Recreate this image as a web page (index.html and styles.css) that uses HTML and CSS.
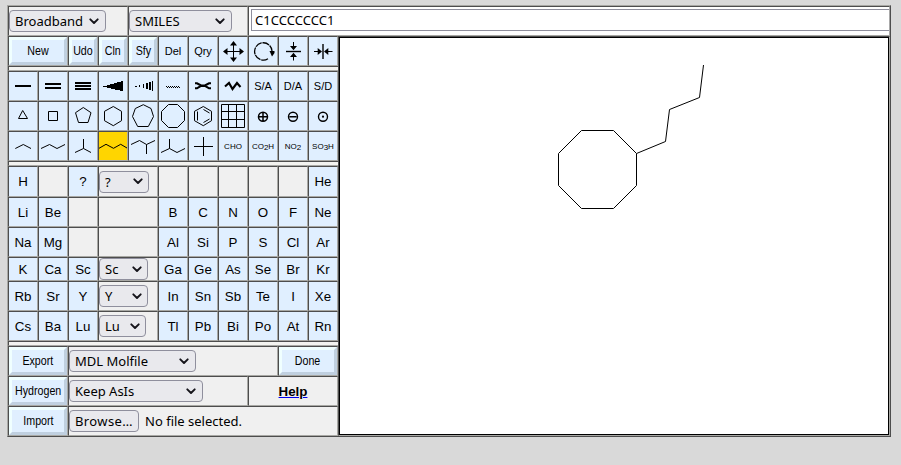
FILE: index.html
```html
<!DOCTYPE html>
<html lang="en">
<head>
<meta charset="utf-8">
<title>Molecule editor</title>
<link rel="stylesheet" href="styles.css">
</head>
<body>
<svg class="defs" width="0" height="0"><symbol id="chev" viewBox="0 0 10 7"><path d="M1.3 1.3 5 5 8.7 1.3" fill="none" stroke="#15141a" stroke-width="1.9" stroke-linecap="round" stroke-linejoin="round"/></symbol></svg>
<main class="app">
  <header class="topbar">
    <div class="cell plain"><div class="select w97"><span>Broadband</span><svg><use href="#chev"/></svg></div></div>
    <div class="cell plain"><div class="select w103"><span>SMILES</span><svg><use href="#chev"/></svg></div></div>
    <div class="cell field"><div class="input"><span>C1CCCCCCC1</span></div></div>
  </header>
  <div class="body">
    <aside class="panel">
      <div class="grid">
        <div class="cell span2 raised"><span>New</span></div>
        <div class="cell raised"><span>Udo</span></div>
        <div class="cell raised"><span>Cln</span></div>
        <div class="cell raised"><span>Sfy</span></div>
        <div class="cell mid">Del</div>
        <div class="cell mid">Qry</div>
        <div class="cell"><svg class="icon" viewBox="0 0 28 28"><path d="M14.5 6v17M6 14.5h17"/><path class="solid" d="M14.5 4l3.5 4.5h-7zM14.5 25l3.5-4.5h-7zM4 14.5l4.5-3.500v7zM25 14.5l-4.500-3.500v7z"/></svg></div>
        <div class="cell"><svg class="icon" viewBox="0 0 28 28"><path stroke-width="1.3" stroke-dasharray="7 .8" d="M19 21.800A8.700 8.700 0 1 1 23 14"/><path class="solid" d="M20.500 14h5v2l-2.500 3.500z"/></svg></div>
        <div class="cell"><svg class="icon" viewBox="0 0 28 28"><path stroke-width="1.400" d="M7 14.500h15"/><path d="M14.500 5v6M14.500 18v5.500"/><path class="solid" d="M11 9h7l-3.500 4.300zM11 20h7l-3.500-4.300z"/></svg></div>
        <div class="cell"><svg class="icon" viewBox="0 0 28 28"><path stroke-width="1.400" d="M14 7v15"/><path d="M5 14.500h6M17 14.500h6.500"/><path class="solid" d="M8.700 11v7l4.300-3.500zM19.300 11v7l-4.300-3.500z"/></svg></div>
      </div>
      <div class="gap"></div>
      <div class="grid">
        <div class="cell"><svg class="icon" viewBox="0 0 28 28"><path stroke-width="2" d="M6 14h16"/></svg></div>
        <div class="cell"><svg class="icon" viewBox="0 0 28 28"><path stroke-width="2" d="M6 12h16M6 16h16"/></svg></div>
        <div class="cell"><svg class="icon" viewBox="0 0 28 28"><path stroke-width="2" d="M6 11h16M6 14h16M6 17h16"/></svg></div>
        <div class="cell"><svg class="icon crisp" viewBox="0 0 28 28"><path class="solid" d="M4 14v1h4v1h4v1h4v1h5v1h3V9h-2v1h-4v1h-3v1h-4v1H8v1z"/></svg></div>
        <div class="cell"><svg class="icon crisp" viewBox="0 0 28 28"><path class="solid" d="M6 14h2v1H6zM10 13h1v2h-1zM14 12h1v4h-1zM17 11h2v6h-2zM20 10h2v8h-2zM23 9h1v10h-1z"/></svg></div>
        <div class="cell"><svg class="icon crisp" viewBox="0 0 28 28"><path class="solid" d="M7 14h1v1H7zM9 14h1v1H9zM11 14h1v1h-1zM13 14h1v1h-1zM15 14h1v1h-1zM17 14h1v1h-1zM19 14h1v1h-1zM8 15h1v1H8zM10 15h1v1h-1zM12 15h1v1h-1zM14 15h1v1h-1zM16 15h1v1h-1zM18 15h1v1h-1zM20 15h1v1h-1z"/></svg></div>
        <div class="cell"><svg class="icon" viewBox="0 0 28 28"><path stroke-width="2.100" d="M6 11.300h2l4 2.200h4l4-2.200h2M6 16.300h2l4-2.400h4l4 2.400h2"/></svg></div>
        <div class="cell"><svg class="icon" viewBox="0 0 28 28"><path stroke-width="2.100" d="M6 14.500l4-3.500 3.500 6 4.500-6 3.500 4"/></svg></div>
        <div class="cell mid">S/A</div>
        <div class="cell mid">D/A</div>
        <div class="cell mid">S/D</div>

        <div class="cell"><svg class="icon" viewBox="0 0 28 28"><path d="M13.700 8.500 9.500 16.500h9z"/></svg></div>
        <div class="cell"><svg class="icon" viewBox="0 0 28 28"><path d="M9.500 9.500h9v9h-9z"/></svg></div>
        <div class="cell"><svg class="icon" viewBox="0 0 28 28"><path d="M14.300 5.500 22 10.700 19 20.500H9.500l-3-9.800z"/></svg></div>
        <div class="cell"><svg class="icon" viewBox="0 0 28 28"><path d="M14.300 4.500 22.500 9.300v9.400l-8.200 5-8.800-5V9.300z"/></svg></div>
        <div class="cell"><svg class="icon" viewBox="0 0 28 28"><path d="M14.300 2.700 22 6.500 24.500 14.500 19.300 24.500H8.700L3.500 14.500 6.300 6.500z"/></svg></div>
        <div class="cell"><svg class="icon" viewBox="0 0 28 28"><path d="M9.500 2.500h9l7 7v9l-7 7h-9l-7-7v-9z"/></svg></div>
        <div class="cell"><svg class="icon" viewBox="0 0 28 28"><path d="M14.300 4.500 22.500 9.300v9.400l-8.200 5-8.800-5V9.300zM8.500 9.500v9M14.500 7.500l6 3.500M14.500 20.500l6-3.500"/></svg></div>
        <div class="cell"><svg class="icon" viewBox="0 0 28 28"><path d="M2.500 2.500h23v23h-23zM9.500 2.500v23M17.500 2.500v23M2.500 9.500h23M2.500 17.500h23"/></svg></div>
        <div class="cell"><svg class="icon" viewBox="0 0 28 28"><path stroke-width="1.500" d="M9.500 14.700a4.500 4.500 0 1 0 9 0a4.500 4.500 0 1 0-9 0h9M14 10.200v9"/></svg></div>
        <div class="cell"><svg class="icon" viewBox="0 0 28 28"><path stroke-width="1.400" d="M9.500 14.700a4.500 4.500 0 1 0 9 0a4.500 4.500 0 1 0-9 0M10.500 14.700h7"/></svg></div>
        <div class="cell"><svg class="icon" viewBox="0 0 28 28"><circle cx="14" cy="14.700" r="4.500" stroke-width="1.400"/><circle class="solid" cx="14" cy="14.700" r="1.100"/></svg></div>

        <div class="cell"><svg class="icon" viewBox="0 0 28 28"><path d="M6.300 16.500l8-4 7.700 4"/></svg></div>
        <div class="cell"><svg class="icon" viewBox="0 0 28 28"><path d="M2 16.500l8.500-4 7.500 4 8-4"/></svg></div>
        <div class="cell"><svg class="icon" viewBox="0 0 28 28"><path d="M14.500 7v9.500M6 20.500l8.500-4 7.500 4"/></svg></div>
        <div class="cell active"><svg class="icon" viewBox="0 0 28 28"><path d="M0 16.300l7-4 7.500 4 7.200-4 6.800 4"/></svg></div>
        <div class="cell"><svg class="icon" viewBox="0 0 28 28"><path d="M2 12.500l8.500-4 7 4 8.500-4M17.500 12.500v9.500"/></svg></div>
        <div class="cell"><svg class="icon" viewBox="0 0 28 28"><path d="M10.500 7v9.500M2 20.500l8.500-4 7.500 4 8-4"/></svg></div>
        <div class="cell"><svg class="icon" viewBox="0 0 28 28"><path d="M14.500 5v19M5 14.500h19"/></svg></div>
        <div class="cell tiny">CHO</div>
        <div class="cell tiny">CO<small>2</small>H</div>
        <div class="cell tiny">NO<small>2</small></div>
        <div class="cell tiny">SO<small>3</small>H</div>
      </div>
      <div class="gap"></div>
      <div class="grid elements">
        <div class="cell">H</div><div class="cell plain"></div><div class="cell">?</div>
        <div class="cell plain span2"><div class="select w50"><span>?</span><svg><use href="#chev"/></svg></div></div>
        <div class="cell plain"></div><div class="cell plain"></div><div class="cell plain"></div><div class="cell plain"></div><div class="cell plain"></div><div class="cell">He</div>

        <div class="cell">Li</div><div class="cell">Be</div><div class="cell plain"></div><div class="cell plain span2"></div>
        <div class="cell">B</div><div class="cell">C</div><div class="cell">N</div><div class="cell">O</div><div class="cell">F</div><div class="cell">Ne</div>

        <div class="cell">Na</div><div class="cell">Mg</div><div class="cell plain"></div><div class="cell plain span2"></div>
        <div class="cell">Al</div><div class="cell">Si</div><div class="cell">P</div><div class="cell">S</div><div class="cell">Cl</div><div class="cell">Ar</div>

        <div class="cell">K</div><div class="cell">Ca</div><div class="cell">Sc</div>
        <div class="cell plain span2"><div class="select w49"><span>Sc</span><svg><use href="#chev"/></svg></div></div>
        <div class="cell">Ga</div><div class="cell">Ge</div><div class="cell">As</div><div class="cell">Se</div><div class="cell">Br</div><div class="cell">Kr</div>

        <div class="cell">Rb</div><div class="cell">Sr</div><div class="cell">Y</div>
        <div class="cell plain span2"><div class="select w49"><span>Y</span><svg><use href="#chev"/></svg></div></div>
        <div class="cell">In</div><div class="cell">Sn</div><div class="cell">Sb</div><div class="cell">Te</div><div class="cell">I</div><div class="cell">Xe</div>

        <div class="cell">Cs</div><div class="cell">Ba</div><div class="cell">Lu</div>
        <div class="cell plain span2"><div class="select w47"><span>Lu</span><svg><use href="#chev"/></svg></div></div>
        <div class="cell">Tl</div><div class="cell">Pb</div><div class="cell">Bi</div><div class="cell">Po</div><div class="cell">At</div><div class="cell">Rn</div>
      </div>
      <div class="gap"></div>
      <div class="grid">
        <div class="cell span2 raised"><span>Export</span></div>
        <div class="cell plain span7"><div class="select w127"><span>MDL Molfile</span><svg><use href="#chev"/></svg></div></div>
        <div class="cell span2 raised"><span>Done</span></div>

        <div class="cell span2 raised"><span>Hydrogen</span></div>
        <div class="cell plain span6"><div class="select w134"><span>Keep AsIs</span><svg><use href="#chev"/></svg></div></div>
        <div class="cell plain span3 help"><a href="#">Help</a></div>

        <div class="cell span2 raised"><span>Import</span></div>
        <div class="cell plain span9"><div class="select w70"><span>Browse…</span></div><span class="file">No file selected.</span></div>
      </div>
    </aside>
    <section class="drawing">
      <svg class="molecule" width="548" height="396" viewBox="340 38 548 396"><path d="M581.500 130.500h32l23 23v32l-23 23h-32l-23-23v-32z"/><path d="M636.500 153.500l29-12 4-32 30-12 4-32.500"/></svg>
    </section>
  </div>
</main>
</body>
</html>
```
FILE: styles.css
```css
* { box-sizing: border-box; }
:root { --dark: #4d4d4d; --light: #a8a8a4; --blue: #e0efff; --plain: #f0f0f0; }
body { margin: 0; padding: 5px 7px; background: #d9d9d9; color: #000; font: 13.333px "Liberation Sans", Arial, sans-serif; overflow: hidden; }
.defs { position: absolute; }
.app { width: 884px; height: 432px; border: 1px solid; border-color: var(--light) var(--dark) var(--dark) var(--light); }
.topbar { display: grid; grid-template-columns: 120px 120px 642px; height: 30px; }
.body { display: grid; grid-template-columns: 330px 552px; height: 400px; }
.grid { display: grid; grid-template-columns: repeat(11, 30px); grid-auto-rows: 30px; }
.elements { grid-template-rows: 31px 30px 30px 24px 30px 30px; }
.cell { display: flex; align-items: center; justify-content: center; min-width: 0; border: 1px solid; border-color: var(--dark) var(--light) var(--light) var(--dark); background: var(--blue); white-space: nowrap; }
.plain { justify-content: flex-start; background: var(--plain); }
.active { background: #ffd500; }
.span2 { grid-column: span 2; }
.span3 { grid-column: span 3; }
.span6 { grid-column: span 6; }
.span7 { grid-column: span 7; }
.span9 { grid-column: span 9; }
.gap { height: 5px; border-top: 1px solid var(--dark); border-bottom: 1px solid var(--light); border-left: 1px solid var(--dark); background: #f3f3f0; }
.mid { font-size: 11px; }
.tiny { font-size: 8px; }
.tiny small { font-size: 8px; position: relative; top: 1px; }
.raised { position: relative; }
.raised::before { content: ""; position: absolute; inset: 0; border: 3px solid; border-color: #f0ffff #c0d0e0 #c0d0e0 #f0ffff; }
.raised span { position: relative; padding-bottom: 2px; font-size: 13px; transform: scaleX(.82); }
.icon { width: 28px; height: 28px; fill: none; stroke: #000; }
.icon .solid { fill: #000; stroke: none; }
.crisp { shape-rendering: crispEdges; }
.select { display: flex; align-items: center; justify-content: space-between; flex: none; height: 22px; padding: 0 6px 0 5px; border: 1px solid #8f8f9d; border-radius: 4px; background: #e9e9ed; font: 13px/18px "Noto Sans", sans-serif; }
.elements .select { padding-right: 5px; }
.select svg { width: 10px; height: 7px; }
.w47 { width: 47px; }
.w49 { width: 49px; }
.w50 { width: 50px; }
.w70 { width: 70px; letter-spacing: .4px; }
.w97 { width: 97px; }
.w103 { width: 103px; }
.w127 { width: 127px; }
.w134 { width: 134px; }
.field { justify-content: flex-start; padding-left: 2px; background: #fff; border-right-color: #a8a8a8; }
.input { display: flex; align-items: center; width: 638px; height: 22px; margin-top: -2px; padding-left: 3px; border: 1px solid #8f8f9d; border-right: 0; font: 13px "Noto Sans", sans-serif; letter-spacing: .05px; }
.file { margin-left: 6px; font: 13px "Noto Sans", sans-serif; }
.help { justify-content: center; font-weight: bold; }
.help a { color: #000; text-decoration: underline #0000ee; }
.drawing { border: 1px solid; border-color: var(--dark) var(--light) var(--light) var(--dark); background: #fff; }
.molecule { display: block; box-sizing: content-box; border: 1px solid #000; }
.molecule path { fill: none; stroke: #000; stroke-width: 1; }
```
